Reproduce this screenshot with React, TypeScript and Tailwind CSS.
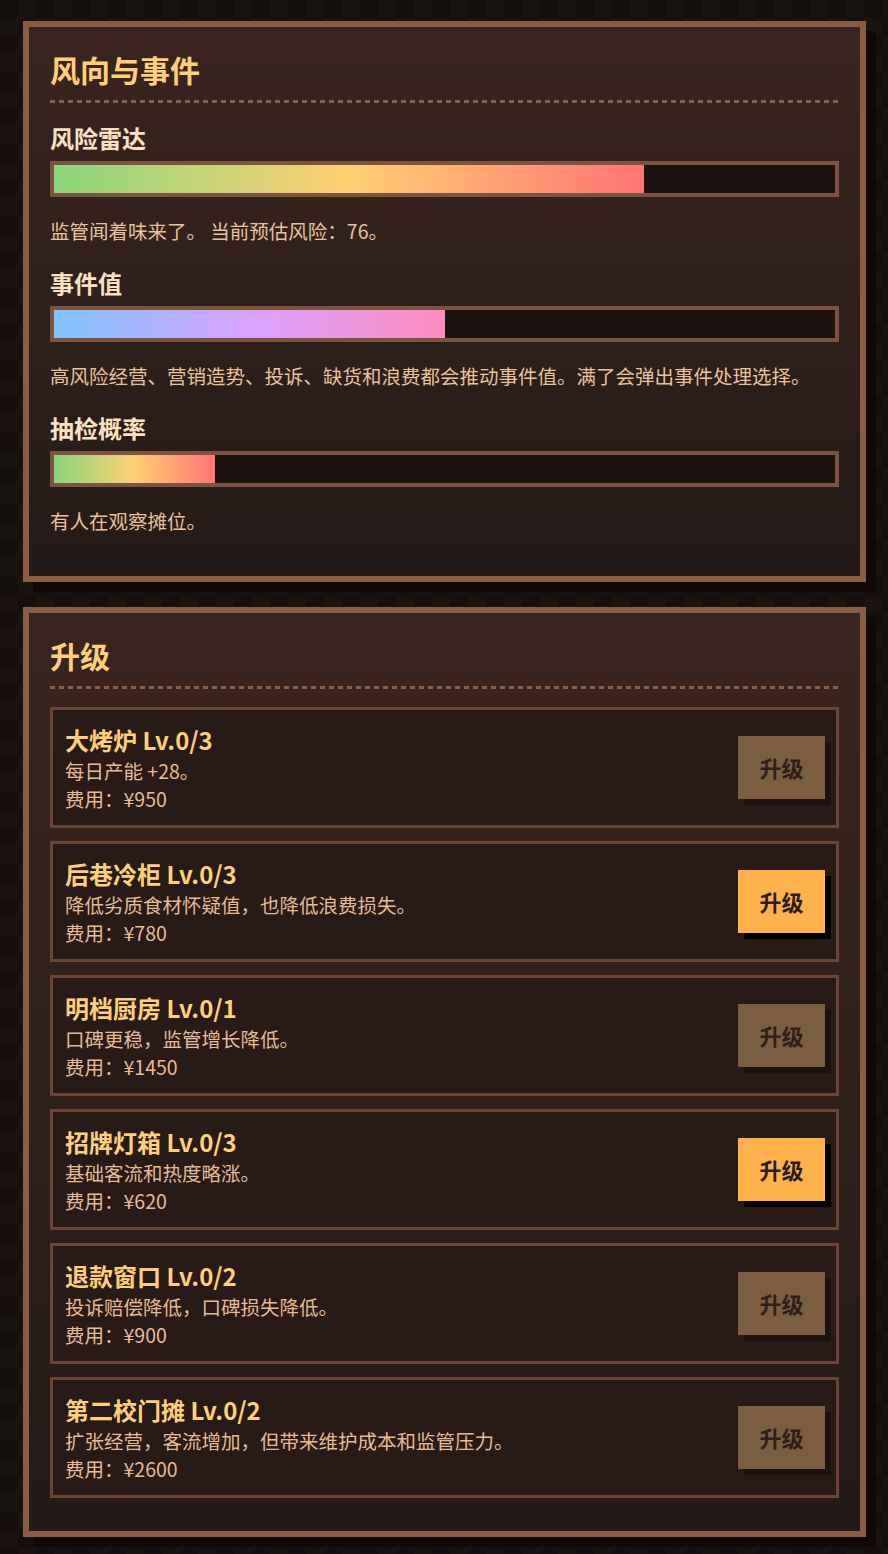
const font = { fontFamily: '"Noto Sans CJK SC", "Noto Sans", sans-serif' }

type Meter = {
  label: string
  fill: number
  gradient: string
  note: string
}

const meters: Meter[] = [
  {
    label: '风险雷达',
    fill: 75.5,
    gradient: 'bg-[linear-gradient(90deg,#8bd67b_0%,#ffd073_50%,#ff7474_100%)]',
    note: '监管闻着味来了。 当前预估风险：76。',
  },
  {
    label: '事件值',
    fill: 50,
    gradient: 'bg-[linear-gradient(90deg,#80c4ff_0%,#d8a4ff_50%,#ff8cc0_100%)]',
    note: '高风险经营、营销造势、投诉、缺货和浪费都会推动事件值。满了会弹出事件处理选择。',
  },
  {
    label: '抽检概率',
    fill: 20.6,
    gradient: 'bg-[linear-gradient(90deg,#8bd67b_0%,#ffd073_50%,#ff7474_100%)]',
    note: '有人在观察摊位。',
  },
]

type Upgrade = {
  name: string
  level: string
  desc: string
  cost: number
  affordable: boolean
}

const upgrades: Upgrade[] = [
  { name: '大烤炉', level: 'Lv.0/3', desc: '每日产能 +28。', cost: 950, affordable: false },
  { name: '后巷冷柜', level: 'Lv.0/3', desc: '降低劣质食材怀疑值，也降低浪费损失。', cost: 780, affordable: true },
  { name: '明档厨房', level: 'Lv.0/1', desc: '口碑更稳，监管增长降低。', cost: 1450, affordable: false },
  { name: '招牌灯箱', level: 'Lv.0/3', desc: '基础客流和热度略涨。', cost: 620, affordable: true },
  { name: '退款窗口', level: 'Lv.0/2', desc: '投诉赔偿降低，口碑损失降低。', cost: 900, affordable: false },
  { name: '第二校门摊', level: 'Lv.0/2', desc: '扩张经营，客流增加，但带来维护成本和监管压力。', cost: 2600, affordable: false },
]

const PanelTitle = ({ children }: { children: string }) => (
  <>
    <h2 className="pb-[13px] text-[30px] font-bold leading-[36px] text-[#ffcf7a]">{children}</h2>
    {/* dashed divider */}
    <div className="h-[3px] bg-[repeating-linear-gradient(90deg,#8d5f46_0_5px,transparent_5px_9px)]" />
  </>
)

const Panel = ({ title, className, children }: { title: string; className: string; children: React.ReactNode }) => (
  <section
    className={`border-[6px] border-[#8a5c44] bg-[linear-gradient(180deg,#3b241f_0%,#2f201b_50%,#241a17_100%)] px-[21px] pt-[24px] shadow-[10px_10px_0_#100908] ${className}`}
  >
    <PanelTitle>{title}</PanelTitle>
    {children}
  </section>
)

const App = () => {
  return (
    <div
      style={font}
      className="min-h-screen bg-[#140e0c] bg-[repeating-conic-gradient(#1a1411_0_25%,#150f0d_0_50%)] bg-[length:36px_36px] pb-[18px] pl-[23px] pr-[22px] pt-[21px]"
    >
      <div className="flex flex-col gap-[25px]">
        <Panel title="风向与事件" className="pb-[41px]">
          <div className="mt-[19px] flex flex-col gap-[22px]">
            {meters.map((m) => (
              <div key={m.label}>
                <h3 className="text-[24px] font-bold leading-[32px] text-[#fbe0c2]">{m.label}</h3>
                <div className="mt-[7px] h-[36px] border-4 border-[#7b5340] bg-[#1c1310]">
                  <div className={`h-full ${m.gradient}`} style={{ width: `${m.fill}%` }} />
                </div>
                <p className="mt-[20px] text-[19.5px] leading-[28px] text-[#eac19a]">{m.note}</p>
              </div>
            ))}
          </div>
        </Panel>

        <Panel title="升级" className="pb-[33px]">
          <div className="mt-[18px] flex flex-col gap-[13px]">
            {upgrades.map((u) => (
              <div
                key={u.name}
                className="flex items-center justify-between border-[3px] border-[#6e4534] bg-[#281a16] py-[12px] pl-[12px] pr-[11px]"
              >
                <div>
                  <h4 className="text-[24px] font-bold leading-[35px] text-[#ffcf7a]">
                    {u.name} {u.level}
                  </h4>
                  <p className="text-[19.5px] leading-[28px] text-[#e6ba95]">{u.desc}</p>
                  <p className="text-[19.5px] leading-[28px] text-[#e6ba95]">费用：¥{u.cost}</p>
                </div>
                <button
                  className={
                    u.affordable
                      ? 'h-[63px] w-[87px] bg-[#ffb24c] text-[22px] font-bold text-[#2b1b14] shadow-[6px_6px_0_#000]'
                      : 'h-[63px] w-[87px] bg-[#7b5d40] text-[22px] font-bold text-[#2e1f17] shadow-[6px_6px_0_#1b120f]'
                  }
                >
                  升级
                </button>
              </div>
            ))}
          </div>
        </Panel>
      </div>
    </div>
  )
}

export default App
